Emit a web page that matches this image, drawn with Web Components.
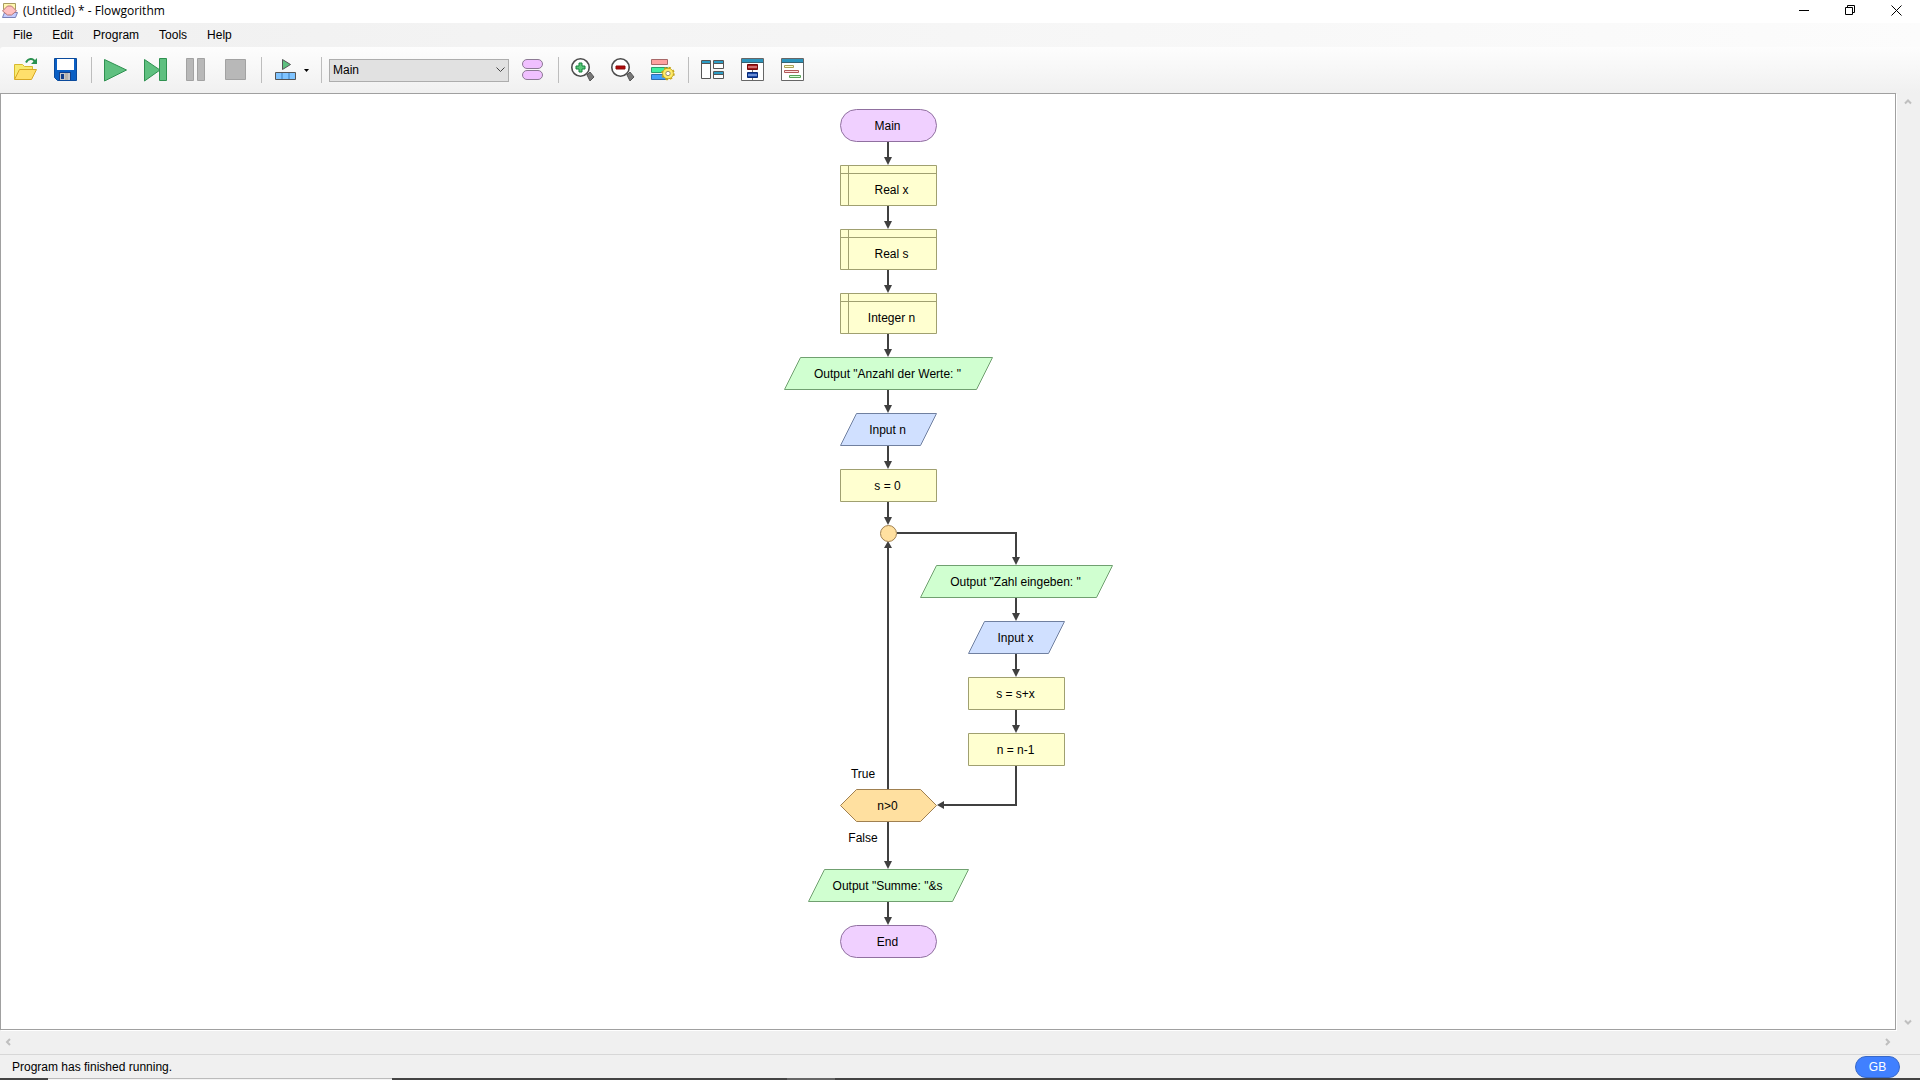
<!DOCTYPE html>
<html lang="en">
<head>
<meta charset="utf-8">
<title>(Untitled) * - Flowgorithm</title>
<style>
html,body{height:100%;margin:0}
body{font:12px/16px "Liberation Sans",Arial,sans-serif;color:#000;background:#f0f0f0;overflow:hidden}
</style>
</head>
<body>
<flow-app></flow-app>
<script>
const define=(name,html,setup)=>customElements.define(name,class extends HTMLElement{
  connectedCallback(){
    if(this.shadowRoot)return;
    const t=document.createElement('template');
    t.innerHTML=html;
    this.attachShadow({mode:'open'}).append(t.content.cloneNode(true));
    if(setup)setup(this,this.shadowRoot);
  }
});

const ICONS={
open:`<path d="M.5 21V6.500h8l2 2h8v4" fill="#f8ea70" stroke="#d9b92e"/><path d="M.5 21.500l5-10h17l-5 10z" fill="#ffdf6b" stroke="#d8a824"/><path d="M12 4.500C14 .5 19-.5 21 4" fill="none" stroke="#2b9150" stroke-width="2"/><path d="M23 0v6h-6z" fill="#2b9150"/>`,
save:`<path d="M.5.5h22v22h-19l-3-3z" fill="#0a5fc4" stroke="#0a4a9c"/><path d="M3 1h17v11H3z" fill="#fff"/><path d="M5 14h12v8H5z" fill="#123f8a"/><path d="M6 15h10v7H6z" fill="#c8c8c8"/><path d="M7 16h3v5H7z" fill="#123f8a"/><path d="M11 15h3v7h-3z" fill="#b8b4ac"/>`,
play:`<path d="M.5 1.500l22 10.500L.5 23z" fill="#5fc080" stroke="#2e9150"/>`,
step:`<path d="M.5 1.500L16 12 .5 23zM15.500.5h7v22h-7z" fill="#5fc080" stroke="#2e9150"/>`,
pause:`<path d="M2.500.5h7v22h-7zM13.500.5h7v22h-7z" fill="#b8b8b8" stroke="#a2a2a2"/>`,
stop:`<path d="M1.500 1.500h20v20h-20z" fill="#b8b8b8" stroke="#a2a2a2"/>`,
run:`<path d="M8.500 1.500l8 5-8 5z" fill="#5fc080" stroke="#555"/><path d="M1.500 14.500h20v7h-20z" fill="#80c4ff" stroke="#555"/><path d="M8 15v6M15 15v6" stroke="#3a7fc0" fill="none"/>`,
pills:`<rect x="1.500" y="1.500" width="20" height="9" rx="4.500" fill="#f0c0ff" stroke="#8c7a94"/><rect x="1.500" y="12.500" width="20" height="9" rx="4.500" fill="#f0c0ff" stroke="#8c7a94"/>`,
zin:`<path d="M16 17l3-3 4 5-4 4z" fill="#777" stroke="#555"/><circle cx="9.500" cy="9.500" r="8.700" fill="#fff" stroke="#4c4c4c" stroke-width="1.600"/><path d="M8 5h3v3h3v3h-3v3H8v-3H5V8h3z" fill="#58c878" stroke="#16803c"/>`,
zout:`<path d="M16 17l3-3 4 5-4 4z" fill="#777" stroke="#555"/><circle cx="9.500" cy="9.500" r="8.700" fill="#fff" stroke="#4c4c4c" stroke-width="1.600"/><path d="M5 8h9v3H5z" fill="#b00808" stroke="#8c0a0a"/>`,
style:`<path d="M.5 1.500h16v5H.5z" fill="#ffa0a0" stroke="#a86868"/><path d="M.5 9.500h16v5H.5z" fill="#40f0a0" stroke="#2d9c6c"/><path d="M.5 16.500h16v5H.5z" fill="#40a0f8" stroke="#2e6dac"/><circle cx="17" cy="15.500" r="5.300" fill="#ffec68" stroke="#c4a418"/><circle cx="17" cy="15.500" r="6" fill="none" stroke="#c4a418" stroke-width="1.500" stroke-dasharray="2.300 2.400"/><circle cx="17" cy="15.500" r="4.600" fill="#ffec68"/><circle cx="17" cy="15.500" r="2.200" fill="#fff" stroke="#9c9068"/>`,
panes:`<g fill="#fff" stroke="#555"><path d="M.5 2.500h9v18h-9zM12.500 2.500h10v8h-10zM12.500 13.500h10v7h-10z"/></g><path d="M1 3h8v2H1zM13 3h9v2h-9zM13 14h9v2h-9z" fill="#2c9cc4"/><path d="M1 5.500h8M13 5.500h9M13 16.500h9" stroke="#555"/>`,
chart:`<path d="M.5.5h22v22H.5z" fill="#fff" stroke="#666"/><path d="M1 1h21v3H1z" fill="#2c94bc"/><path d="M.5 4.500h22" stroke="#356474"/><path d="M6.500 6.500h10v5h-10z" fill="#a01818" stroke="#780808"/><path d="M7 9h9" stroke="#ffc4c4"/><path d="M6.500 14.500h10v5h-10z" fill="#1848a8" stroke="#0a2c78"/><path d="M7 17h9" stroke="#c0d4ff"/><path d="M11.500 12v2M11.500 20v2" stroke="#777"/>`,
code:`<path d="M.5.5h22v22H.5z" fill="#fff" stroke="#666"/><path d="M1 1h21v3H1z" fill="#2c94bc"/><path d="M.5 4.500h22" stroke="#356474"/><path d="M3.500 7.500h9v2h-9z" fill="#ffffd0" stroke="#a8a058"/><path d="M3.500 12.500h14v2h-14z" fill="#ffe0e0" stroke="#b05858"/><path d="M8.500 17.500h11v2h-11z" fill="#d8ffd8" stroke="#58a058"/>`
};

define('flow-titlebar',`<style>
:host{display:flex;height:23px;background:#fff;align-items:center;padding:0 1px 0 2px;font-family:"Open Sans","Noto Sans",sans-serif}
h1{font:inherit;margin:0;flex:1;padding:0 0 1px 5px}
button{width:46px;height:23px;padding:0 0 3px;border:0;background:none;display:grid;place-items:center}
svg{display:block}
.logo{margin-bottom:2px}
</style>
<svg class="logo" width="16" height="16"><path d="M1.500.5h12v6h-12z" fill="#fff8b0" stroke="#a89c60"/><path d="M2.500 9.500h13l-2 5h-13z" fill="#c4ccff" stroke="#7880b8"/><path d="M.5 8l5-5h4l5 5-5 4h-4z" fill="#ffc0c0" stroke="#b87878"/></svg>
<h1><slot></slot></h1>
<button aria-label="Minimize"><svg width="11" height="11"><path d="M0 5.500h10" stroke="#000"/></svg></button>
<button aria-label="Restore"><svg width="11" height="11"><path d="M.5 2.500h7v7h-7zM2.500 2.500v-2h7v7h-2" fill="none" stroke="#000"/></svg></button>
<button aria-label="Close"><svg width="11" height="11"><path d="M.5.5l10 10M10.500.5l-10 10" stroke="#000" fill="none"/></svg></button>`);

define('flow-menubar',`<style>
:host{display:block;background:linear-gradient(90deg,#f0f0f0,#fcfcfc)}
nav{display:flex;height:24px;padding:0 3px;align-items:center}
button{font:inherit;color:inherit;border:0;background:none;padding:0 10px}
</style><nav><button>File</button><button>Edit</button><button>Program</button><button>Tools</button><button>Help</button></nav>`);

define('tool-button',`<style>
:host{display:block}
button{display:flex;align-items:center;gap:6px;height:40px;padding:0 8px;border:0;background:none}
:host([menu]) button{padding-right:7px}
svg{display:block;overflow:visible}
</style><button></button>`,(el,root)=>{
  const b=root.querySelector('button');
  b.setAttribute('aria-label',el.getAttribute('label'));
  b.innerHTML=`<svg width="24" height="24">${ICONS[el.getAttribute('icon')]}</svg>`+
    (el.hasAttribute('menu')?'<svg width="5" height="3"><path d="M0 0h5L2.500 3z"/></svg>':'');
});

define('tool-separator',`<style>:host{display:block;width:1px;height:26px;margin:0 4px 0 5px;background:#bdbdbd}</style>`);

define('tool-select',`<style>
:host{display:grid;margin:0 4px 0 3px;align-items:center}
select,svg{grid-area:1/1}
select{width:180px;height:23px;appearance:none;font:inherit;color:#000;background:#e1e1e1;border:1px solid #adadad;border-radius:0;padding:0 20px 0 3px}
svg{justify-self:end;margin-right:4px;pointer-events:none}
</style><select aria-label="Function"><option>Main</option></select><svg width="9" height="6"><path d="M.5.5l4 4 4-4" fill="none" stroke="#444"/></svg>`);

define('flow-toolbar',`<style>
:host{display:flex;align-items:center;height:46px;padding-left:6px;border-top-left-radius:3px;background:linear-gradient(#fdfdfd,#f7f7f7 50%,#f0f0f0)}
</style>
<tool-button icon="open" label="Open"></tool-button><tool-button icon="save" label="Save"></tool-button>
<tool-separator></tool-separator>
<tool-button icon="play" label="Run"></tool-button><tool-button icon="step" label="Step"></tool-button><tool-button icon="pause" label="Pause"></tool-button><tool-button icon="stop" label="Stop"></tool-button>
<tool-separator></tool-separator>
<tool-button icon="run" label="Speed" menu></tool-button>
<tool-separator></tool-separator>
<tool-select></tool-select>
<tool-button icon="pills" label="Functions"></tool-button>
<tool-separator></tool-separator>
<tool-button icon="zin" label="Zoom in"></tool-button><tool-button icon="zout" label="Zoom out"></tool-button><tool-button icon="style" label="Chart style"></tool-button>
<tool-separator></tool-separator>
<tool-button icon="panes" label="Layout windows"></tool-button><tool-button icon="chart" label="Console"></tool-button><tool-button icon="code" label="Source code"></tool-button>`);

const KINDS={
  terminal:['#f0d0ff','#9070a0',(w,h)=>`<rect x=".5" y=".5" width="${w-1}" height="${h-1}" rx="${(h-1)/2}"/>`],
  declare:['#ffffd0','#a0a070',(w,h)=>`<path d="M.5.5H${w-.5}V${h-.5}H.5zM.5 8.500H${w-.5}M8.500.5V${h-.5}"/>`],
  assign:['#ffffd0','#a0a070',(w,h)=>`<path d="M.5.5H${w-.5}V${h-.5}H.5z"/>`],
  output:['#d0ffd0','#70a070',(w,h)=>`<path d="M16.500.5H${w-.5}L${w-16.5} ${h-.5}H.5z"/>`],
  input:['#d0e0ff','#7080a0',(w,h)=>`<path d="M16.500.5H${w-.5}L${w-16.5} ${h-.5}H.5z"/>`],
  loop:['#ffe0a0','#a08050',(w,h)=>`<path d="M16.500.5H${w-16.5}L${w-.5} ${h/2} ${w-16.5} ${h-.5}H16.500L.5 ${h/2}z"/>`],
  join:['#ffe0a0','#a08050',(w,h)=>`<circle cx="${w/2}" cy="${h/2}" r="${w/2-.5}"/>`]
};

define('flow-node',`<style>
:host{position:absolute;display:grid}
svg,span{grid-area:1/1}
svg{display:block}
span{align-self:center;text-align:center;white-space:pre;padding-right:2px}
:host([kind=declare]) span{padding:8px 0 0 6px}
</style><svg></svg><span><slot></slot></span>`,(el,root)=>{
  const n=k=>Number(el.getAttribute(k)),w=n('w'),h=n('h'),[fill,stroke,draw]=KINDS[el.getAttribute('kind')];
  el.style.left=n('x')+'px';el.style.top=n('y')+'px';el.style.width=w+'px';
  const s=root.querySelector('svg');
  s.setAttribute('width',w);s.setAttribute('height',h);
  s.innerHTML=`<g fill="${fill}" stroke="${stroke}">${draw(w,h)}</g>`;
});

const DOWN=[[104,33,56],[104,97,120],[104,161,184],[104,225,248],[104,281,304],[104,337,360],[104,393,416],
  [232,489,512],[232,545,568],[232,601,624],[104,713,760],[104,793,816]];
define('flow-chart',`<style>
:host{display:block;position:relative;width:328px;height:850px}
.edges{position:absolute;left:0;top:0}
.tag{position:absolute;left:54px;width:50px;text-align:center}
.true{top:657px}.false{top:721px}
</style>
<svg class="edges" width="330" height="850"></svg>
<flow-node kind="terminal" x="56" y="0" w="97" h="33">Main</flow-node>
<flow-node kind="declare" x="56" y="56" w="97" h="41">Real x</flow-node>
<flow-node kind="declare" x="56" y="120" w="97" h="41">Real s</flow-node>
<flow-node kind="declare" x="56" y="184" w="97" h="41">Integer n</flow-node>
<flow-node kind="output" x="0" y="248" w="209" h="33">Output "Anzahl der Werte: "</flow-node>
<flow-node kind="input" x="56" y="304" w="97" h="33">Input n</flow-node>
<flow-node kind="assign" x="56" y="360" w="97" h="33">s = 0</flow-node>
<flow-node kind="join" x="96" y="416" w="17" h="17"></flow-node>
<flow-node kind="output" x="136" y="456" w="193" h="33">Output "Zahl eingeben: "</flow-node>
<flow-node kind="input" x="184" y="512" w="97" h="33">Input x</flow-node>
<flow-node kind="assign" x="184" y="568" w="97" h="33">s = s+x</flow-node>
<flow-node kind="assign" x="184" y="624" w="97" h="33">n = n-1</flow-node>
<flow-node kind="loop" x="56" y="680" w="97" h="33">n&gt;0</flow-node>
<flow-node kind="output" x="24" y="760" w="161" h="33">Output "Summe: "&amp;s</flow-node>
<flow-node kind="terminal" x="56" y="816" w="97" h="33">End</flow-node>
<span class="tag true">True</span><span class="tag false">False</span>`,(el,root)=>{
  const head=(x,y)=>`<path d="M${x-4} ${y-8}h8l-4 8z"/>`;
  root.querySelector('.edges').innerHTML=
    `<g fill="none" stroke="#404040" stroke-width="2">${DOWN.map(([x,a,b])=>`<path d="M${x} ${a}V${b-4}"/>`).join('')}
    <path d="M113 424H232V450M232 657V696H158M104 680V438"/></g>
    <g fill="#404040">${DOWN.map(([x,a,b])=>head(x,b)).join('')}${head(232,456)}
    <path d="M100 439h8l-4-7zM160 692v8l-7-4z"/></g>`;
});

define('scroll-bar',`<style>
:host{display:flex;justify-content:space-between;align-items:center}
:host([vertical]){flex-direction:column}
button{border:0;background:none;padding:0;display:block}
svg{display:block}
path{fill:none;stroke:#bfbfbf;stroke-width:2}
</style><button aria-label="Scroll back"><svg width="8" height="8"><path/></svg></button><button aria-label="Scroll forward"><svg width="8" height="8"><path/></svg></button>`,(el,root)=>{
  const [a,b]=root.querySelectorAll('path'),v=el.hasAttribute('vertical');
  a.setAttribute('d',v?'M1 5.500l3-3 3 3':'M6 1L3 4l3 3');
  b.setAttribute('d',v?'M1 2.500l3 3 3-3':'M2 1l3 3-3 3');
});

define('flow-canvas',`<style>
:host{display:grid;grid-template:minmax(0,1fr) 24px/minmax(0,1fr) 24px}
main{display:flex;justify-content:center;padding-top:15px;background:#fff;border:1px solid #a0a0a0;box-shadow:1px 1px #fff;overflow:hidden}
.v{padding:5px 1px 4px 0}
.h{padding:0 4px 1px}
</style><main><flow-chart></flow-chart></main><scroll-bar class="v" vertical></scroll-bar><scroll-bar class="h"></scroll-bar>`);

define('flow-status',`<style>
:host{display:flex;justify-content:space-between;align-items:center;height:24px;padding:0 20px 0 12px;border-top:1px solid #d7d7d7;box-sizing:border-box}
button{font:inherit;color:#fff;background:#4080ff;border:1px solid #3868c8;border-radius:11px;width:45px;height:22px;padding:0}
</style><span><slot></slot></span><button>GB</button>`);

define('desk-edge',`<style>
:host{display:flex;height:2px;background:#444}
i{display:block;height:2px}
.a{width:2.500%}.b{width:17.900%;background:#f4f4f4;box-shadow:inset 0 1px #bbb}.c{width:20.600%}.d{width:2.500%;background:#666}
</style><i class="a"></i><i class="b"></i><i class="c"></i><i class="d"></i>`);

define('flow-app',`<style>
:host{display:flex;flex-direction:column;height:100vh;background:#f0f0f0}
flow-canvas{flex:1;min-height:0}
</style>
<flow-titlebar>(Untitled) * - Flowgorithm</flow-titlebar>
<flow-menubar></flow-menubar>
<flow-toolbar></flow-toolbar>
<flow-canvas></flow-canvas>
<flow-status>Program has finished running.</flow-status>
<desk-edge></desk-edge>`);
</script>
</body>
</html>
